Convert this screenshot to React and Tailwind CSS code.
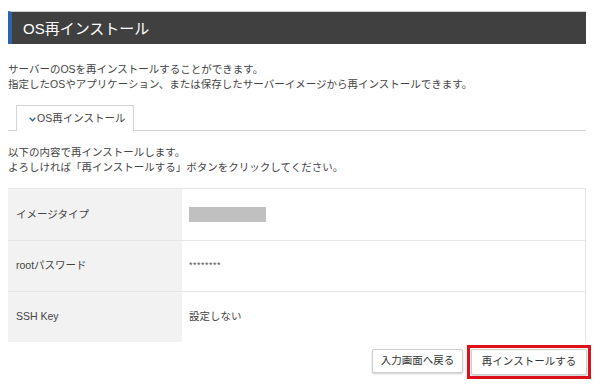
import React from 'react';

const rows = [
  { label: 'イメージタイプ', value: null },
  { label: 'rootパスワード', value: '********' },
  { label: 'SSH Key', value: '設定しない' },
];

const App = () => {
  return (
    <div
      className="w-[600px] h-[384px] bg-white text-[10.5px] text-[#333] overflow-hidden"
      style={{ fontFamily: '"Liberation Sans", "Noto Sans CJK JP", sans-serif' }}
    >
      <div className="pt-[11px] px-[8px] pr-[14px]">
        <div className="h-[33px] bg-[#404040] border-l-[4px] border-[#2d63a8] border-t border-t-[#cfcfcf] flex items-center pl-[11px]">
          <h1 className="text-white text-[15px] leading-none">OS再インストール</h1>
        </div>

        <div className="mt-[18px] leading-[15px] text-[#444]">
          <p>サーバーのOSを再インストールすることができます。</p>
          <p>指定したOSやアプリケーション、または保存したサーバーイメージから再インストールできます。</p>
        </div>

        <div className="mt-[13px] border-b border-[#d4d4d4] flex pl-[8px]">
          <div className="h-[26px] w-[118px] border border-b-0 border-[#d4d4d4] bg-white -mb-px flex items-center pl-[12px] text-[#444] whitespace-nowrap">
            <svg width="7" height="5" viewBox="0 0 7 5" className="mr-[1px] mt-[2px]">
              <path d="M0.7 0.8 L3.5 3.8 L6.3 0.8" fill="none" stroke="#2d5ea8" strokeWidth="1.3" />
            </svg>
            <span>OS再インストール</span>
          </div>
        </div>

        <div className="mt-[14px] leading-[15px] text-[#444]">
          <p>以下の内容で再インストールします。</p>
          <p>よろしければ「再インストールする」ボタンをクリックしてください。</p>
        </div>

        <div className="mt-[13px] border-t border-r border-[#e6e6e6]">
          {rows.map((r, i) => (
            <div key={i} className={`flex h-[51px] ${i > 0 ? 'border-t border-[#e6e6e6]' : ''}`}>
              <div className="w-[174px] bg-[#f2f2f2] flex items-center pl-[8px] text-[#444]">{r.label}</div>
              <div className="flex-1 flex items-center pl-[7px] text-[#444]">
                {r.value === null ? (
                  <div className="w-[77px] h-[15px] bg-[#c0c0c0]" />
                ) : r.value === '********' ? (
                  <span className="text-[9px] tracking-[0.5px] text-[#555]">{r.value}</span>
                ) : (
                  r.value
                )}
              </div>
            </div>
          ))}
        </div>

        <div className="mt-[3px] flex justify-end gap-[4px] -mr-[5px]">
          <div className="mt-[4px] h-[24px] w-[91px] border border-[#cfcfcf] rounded-[2px] shadow-[0_1px_2px_rgba(0,0,0,0.2)] bg-white flex items-center justify-center text-[#333]">
            入力画面へ戻る
          </div>
          <div className="border-[3px] border-[#e0101b] p-[1px] w-[124px] h-[34px]">
            <div className="h-full border border-[#cfcfcf] rounded-[2px] shadow-[0_1px_2px_rgba(0,0,0,0.2)] bg-white flex items-center justify-center text-[#333]">
              再インストールする
            </div>
          </div>
        </div>
      </div>
    </div>
  );
};

export default App;
